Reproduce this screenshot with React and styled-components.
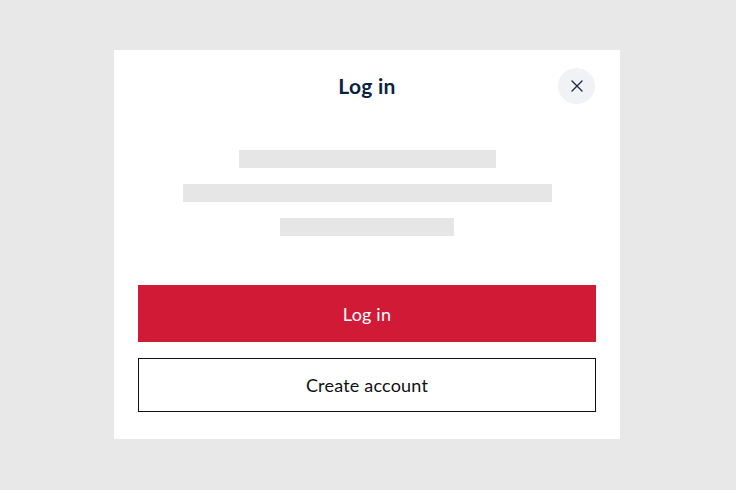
import React from "react";
import styled, { createGlobalStyle } from "styled-components";

const GlobalStyle = createGlobalStyle`
  html, body {
    margin: 0;
    padding: 0;
    background: #e8e8e8;
    font-family: Lato, "Liberation Sans", sans-serif;
  }
  #root {
    min-height: 490px;
    box-sizing: border-box;
    padding: 0 2px 1px 0;
    display: flex;
    align-items: center;
    justify-content: center;
  }
`;

const skeletonWidths = [257, 369, 174];

const App = () => {
  return (
    <>
      <GlobalStyle />
      <Modal>
        <Header>
          <Title>Log in</Title>
          <CloseButton aria-label="Close">
            <svg width="14" height="14" viewBox="0 0 14 14">
              <path
                d="M2 2 L12 12 M12 2 L2 12"
                stroke="#1b2a4a"
                strokeWidth="1.4"
                strokeLinecap="round"
              />
            </svg>
          </CloseButton>
        </Header>

        <Skeletons>
          {skeletonWidths.map((w, i) => (
            <SkeletonBar key={i} $width={w} />
          ))}
        </Skeletons>

        <Actions>
          <Button $primary>Log in</Button>
          <Button>Create account</Button>
        </Actions>
      </Modal>
    </>
  );
};

const Modal = styled.div`
  width: 506px;
  box-sizing: border-box;
  background: #ffffff;
  padding: 17px 24px 27px;
`;
const Header = styled.div`
  position: relative;
  height: 37px;
  display: flex;
  align-items: center;
  justify-content: center;
`;
const Title = styled.h2`
  margin: 0;
  font-size: 21px;
  font-weight: 700;
  color: #0d1f44;
  letter-spacing: 0.3px;
`;
const CloseButton = styled.button`
  position: absolute;
  right: 1px;
  top: 1px;
  width: 37px;
  height: 36px;
  border: none;
  border-radius: 50%;
  background: #f1f2f5;
  display: flex;
  align-items: center;
  justify-content: center;
  padding: 0;
  cursor: pointer;
`;
const Skeletons = styled.div`
  margin-top: 46px;
  display: flex;
  flex-direction: column;
  align-items: center;
  gap: 16px;
`;
const SkeletonBar = styled.div`
  width: ${p => p.$width}px;
  height: 18px;
  background: #e6e6e6;
`;
const Actions = styled.div`
  margin-top: 49px;
  display: flex;
  flex-direction: column;
  gap: 16px;
`;
const Button = styled.button`
  width: 100%;
  height: ${p => (p.$primary ? 57 : 54)}px;
  box-sizing: border-box;
  border: ${p => (p.$primary ? "none" : "1px solid #111")};
  background: ${p => (p.$primary ? "#d11a36" : "#ffffff")};
  color: ${p => (p.$primary ? "#ffffff" : "#111111")};
  font-family: Lato, "Liberation Sans", sans-serif;
  font-size: 18px;
  font-weight: 400;
  letter-spacing: 0.2px;
  cursor: pointer;
`;

export default App;
